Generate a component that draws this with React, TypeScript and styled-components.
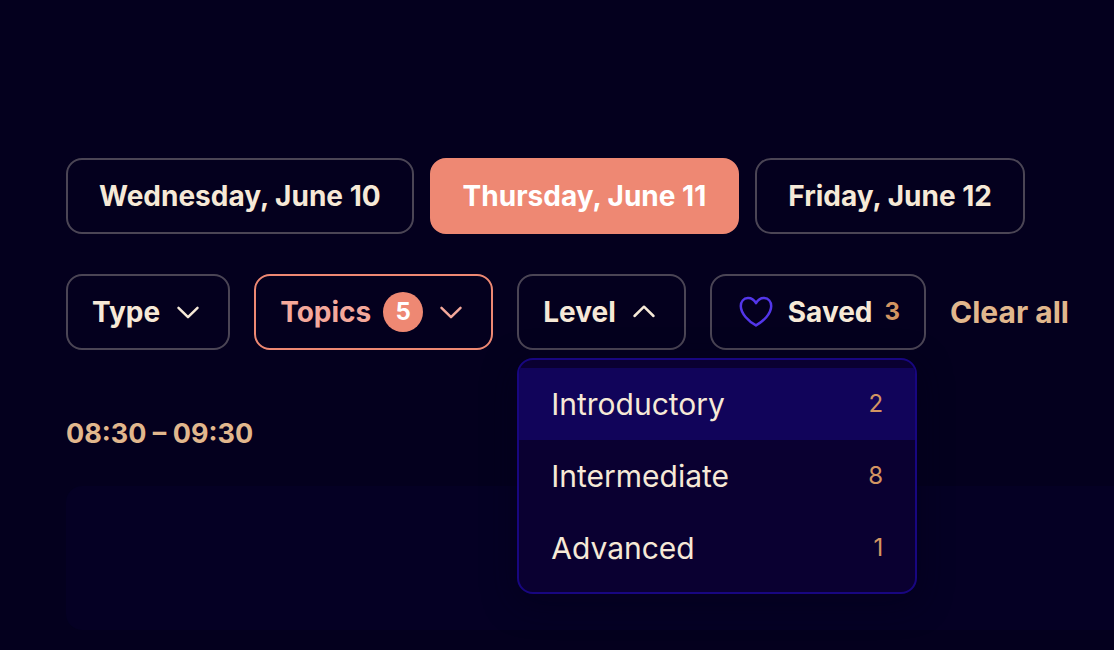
import React, { useState } from "react";
import styled, { createGlobalStyle, css } from "styled-components";

const color = {
  page: "#04001e",
  card: "#050024",
  menu: "#0a0031",
  menuActive: "#11045a",
  menuBorder: "#180680",
  outline: "#4b4555",
  coral: "#ee8873",
  coralText: "#f4a89b",
  cream: "#f6e9d7",
  sand: "#e1b78d",
  amber: "#d39562",
  violet: "#5336ea",
};

const GlobalStyle = createGlobalStyle`
  *, *::before, *::after { box-sizing: border-box; }
  body {
    margin: 0;
    min-height: 100vh;
    overflow-x: hidden;
    background: ${color.page};
    color: ${color.cream};
    font-family: Inter, "Liberation Sans", sans-serif;
    font-size: 28px;
    line-height: 40px;
  }
  button { font: inherit; cursor: pointer; }
`;

const Page = styled.main`
  padding: 158px 0 20px 66px;
`;

const DayTabs = styled.nav`
  display: flex;
  gap: 16px;
`;

const outlined = css`
  display: flex;
  align-items: center;
  justify-content: center;
  height: 76px;
  border: 2px solid ${color.outline};
  border-radius: 16px;
  background: transparent;
  color: ${color.cream};
  font-weight: 700;
  white-space: nowrap;
`;

const DayTab = styled.button<{ $active?: boolean }>`
  ${outlined}
  padding: 0 31px;
  ${({ $active }) =>
    $active &&
    css`
      border-color: ${color.coral};
      background: ${color.coral};
      color: #fff;
    `}
`;

const Filters = styled.div`
  display: flex;
  align-items: center;
  gap: 24px;
  margin-top: 40px;
`;

const FilterSlot = styled.div`
  position: relative;
`;

const FilterButton = styled.button<{ $active?: boolean }>`
  ${outlined}
  gap: 12px;
  padding: 0 24px;
  ${({ $active }) =>
    $active &&
    css`
      border-color: ${color.coral};
      color: ${color.coralText};
    `}
`;

const Badge = styled.span`
  width: 40px;
  height: 40px;
  border-radius: 50%;
  background: ${color.coral};
  color: #fff;
  font-size: 24px;
  text-align: center;
`;

const SavedCount = styled.span`
  color: ${color.amber};
  font-size: 24px;
`;

const ClearLink = styled.a`
  color: ${color.sand};
  font-size: 30px;
  font-weight: 700;
  text-decoration: none;
  white-space: nowrap;
`;

const Menu = styled.ul`
  position: absolute;
  top: calc(100% + 8px);
  left: 0;
  z-index: 1;
  width: 400px;
  margin: 0;
  padding: 8px 0;
  overflow: hidden;
  list-style: none;
  border: 2px solid ${color.menuBorder};
  border-radius: 16px;
  background: ${color.menu};
  box-shadow: 0 8px 32px rgba(4, 0, 24, 0.5);
`;

const MenuOption = styled.button<{ $active?: boolean }>`
  display: flex;
  align-items: center;
  justify-content: space-between;
  width: 100%;
  height: 72px;
  padding: 0 32px;
  border: 0;
  background: ${({ $active }) => ($active ? color.menuActive : "transparent")};
  color: ${color.cream};
  font-size: 30px;
`;

const OptionCount = styled.span`
  color: ${color.amber};
  font-size: 24px;
`;

const SlotTime = styled.h2`
  margin: 64px 0 32px;
  color: ${color.sand};
  font-size: 27px;
  font-weight: 700;
  line-height: 40px;
`;

const SessionCard = styled.article`
  height: 144px;
  border-radius: 16px 0 0 16px;
  background: ${color.card};
`;

function Chevron({ up = false }: { up?: boolean }) {
  return (
    <svg width="32" height="32" viewBox="0 0 32 32" fill="none" aria-hidden="true">
      <path
        d={up ? "M6.5 20L16 10.7L25.5 20" : "M6.5 11.8L16 21.1L25.5 11.8"}
        stroke="currentColor"
        strokeWidth="2.5"
        strokeLinecap="round"
        strokeLinejoin="round"
      />
    </svg>
  );
}

function Heart() {
  return (
    <svg width="40" height="40" viewBox="0 0 40 40" fill="none" aria-hidden="true">
      <path
        d="M20 11.2C17.8 7.4 14.8 5.8 11.8 6C7.6 6.3 4.8 9.6 4.8 14C4.8 21.5 12.4 29.2 20 33.4C27.6 29.2 35.2 21.5 35.2 14C35.2 9.6 32.4 6.3 28.2 6C25.2 5.8 22.2 7.4 20 11.2Z"
        stroke={color.violet}
        strokeWidth="2.5"
        strokeLinejoin="round"
      />
    </svg>
  );
}

const days = ["Wednesday, June 10", "Thursday, June 11", "Friday, June 12"];

const levels = [
  { name: "Introductory", count: 2 },
  { name: "Intermediate", count: 8 },
  { name: "Advanced", count: 1 },
];

export default function App() {
  const [day, setDay] = useState(days[1]);
  const [level, setLevel] = useState(levels[0].name);
  const [levelOpen, setLevelOpen] = useState(true);

  return (
    <>
      <GlobalStyle />
      <Page>
        <DayTabs aria-label="Conference days">
          {days.map((name) => (
            <DayTab key={name} $active={name === day} aria-pressed={name === day} onClick={() => setDay(name)}>
              {name}
            </DayTab>
          ))}
        </DayTabs>

        <Filters>
          <FilterButton aria-expanded={false}>
            <span>Type</span>
            <Chevron />
          </FilterButton>
          <FilterButton $active aria-expanded={false}>
            <span>Topics</span>
            <Badge>5</Badge>
            <Chevron />
          </FilterButton>
          <FilterSlot>
            <FilterButton aria-expanded={levelOpen} onClick={() => setLevelOpen(!levelOpen)}>
              <span>Level</span>
              <Chevron up={levelOpen} />
            </FilterButton>
            {levelOpen && (
              <Menu>
                {levels.map(({ name, count }) => (
                  <li key={name}>
                    <MenuOption $active={name === level} onClick={() => setLevel(name)}>
                      <span>{name}</span>
                      <OptionCount>{count}</OptionCount>
                    </MenuOption>
                  </li>
                ))}
              </Menu>
            )}
          </FilterSlot>
          <FilterButton>
            <Heart />
            <span>Saved</span>
            <SavedCount>3</SavedCount>
          </FilterButton>
          <ClearLink href="#all">Clear all</ClearLink>
        </Filters>

        <SlotTime>08:30 – 09:30</SlotTime>
        <SessionCard />
      </Page>
    </>
  );
}
